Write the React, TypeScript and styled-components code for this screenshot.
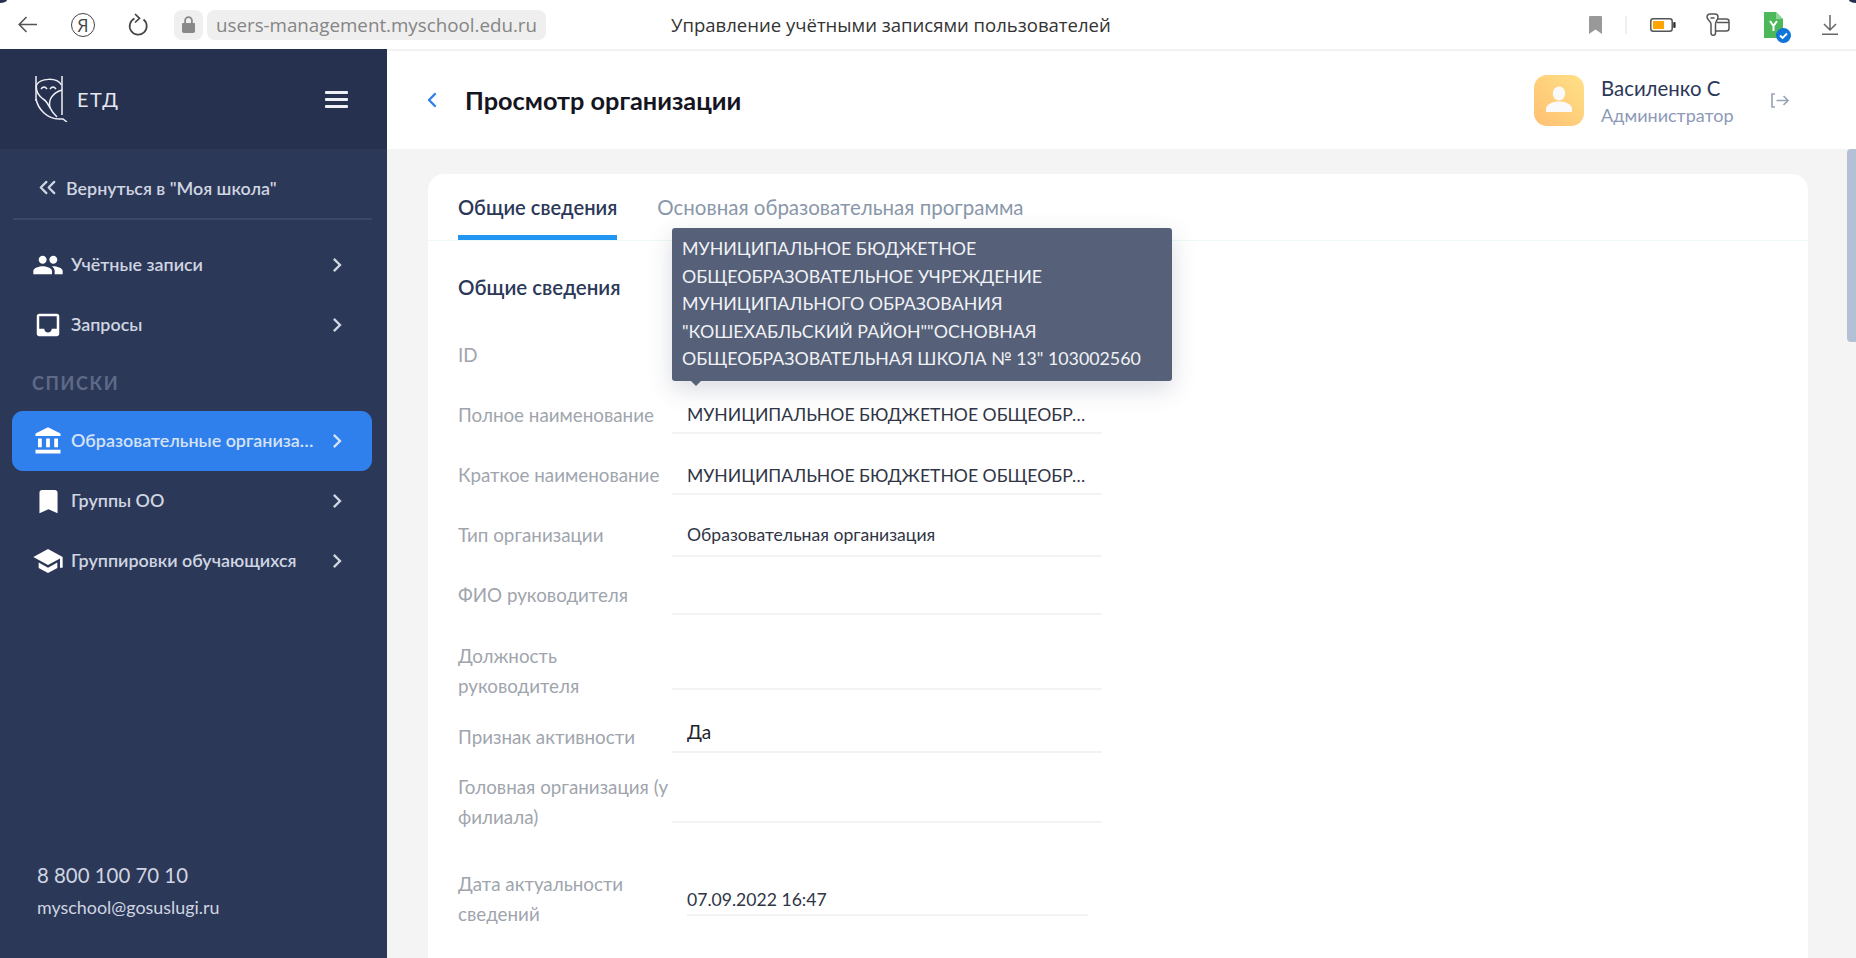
import styled, { createGlobalStyle } from 'styled-components'
import { LuChevronLeft, LuChevronsLeft } from 'react-icons/lu'
import { MdAccountBalance, MdBookmark, MdChevronRight, MdInbox, MdPeople, MdSchool } from 'react-icons/md'
import type { ReactNode } from 'react'

const GlobalStyle = createGlobalStyle`
	html, body {
		margin: 0;
		padding: 0;
		height: 100%;
		overflow: hidden;
		background: #fff;
		font-family: Lato, "Open Sans", "Liberation Sans", sans-serif;
	}
	* {
		box-sizing: border-box;
	}
`

const Page = styled.div`
	display: flex;
	flex-direction: column;
	width: 1856px;
	height: 958px;
	overflow: hidden;
`

const BrowserBar = styled.div`
	position: relative;
	display: flex;
	align-items: center;
	flex: 0 0 49px;
	background: #fff;
	&::before,
	&::after {
		content: '';
		position: absolute;
		top: 0;
		width: 7px;
		height: 3px;
		background: #26304f;
	}
	&::before {
		left: 0;
		border-bottom-right-radius: 7px 3px;
	}
	&::after {
		right: 0;
		border-bottom-left-radius: 7px 3px;
	}
`

const BarIcon = styled.svg<{ $left: number; $down?: number }>`
	flex: none;
	margin-left: ${({ $left }) => $left}px;
	margin-top: ${({ $down }) => $down ?? 0}px;
	display: block;
`

const YandexMark = styled.span`
	flex: none;
	display: flex;
	align-items: center;
	justify-content: center;
	width: 24px;
	height: 24px;
	margin-left: 34px;
	border: 1.6px solid #444;
	border-radius: 50%;
	color: #444;
	font: 18px 'Open Sans', sans-serif;
`

const LockBox = styled.div`
	flex: none;
	display: flex;
	align-items: center;
	justify-content: center;
	width: 29px;
	height: 30px;
	margin-left: 26px;
	background: #efefef;
	border-radius: 8px;
`

const UrlBox = styled.div`
	flex: none;
	width: 339px;
	height: 30px;
	margin-left: 4px;
	padding-left: 9px;
	background: #efefef;
	border-radius: 8px;
	color: #858585;
	font: 18.75px/30px 'Open Sans', sans-serif;
	white-space: nowrap;
`

const PageTitle = styled.div`
	flex: none;
	margin-left: 125px;
	color: #333;
	font: 18.55px/24px 'Open Sans', sans-serif;
	white-space: nowrap;
`

const BarActions = styled.div`
	display: flex;
	align-items: center;
	margin-left: auto;
	padding-right: 18px;
`

const BarSeparator = styled.div`
	width: 2px;
	height: 18px;
	margin-left: 23px;
	background: #f0f0f0;
`

const Body = styled.div`
	display: flex;
	flex: 1;
	min-height: 0;
`

const Sidebar = styled.aside`
	display: flex;
	flex-direction: column;
	flex: 0 0 387px;
	background: #2c3858;
	color: #cfd5e1;
`

const SidebarTop = styled.div`
	display: flex;
	align-items: center;
	justify-content: space-between;
	flex: 0 0 100px;
	padding: 0 39px 0 35px;
	background: #26304f;
`

const Logo = styled.div`
	display: flex;
	align-items: center;
	gap: 8px;
	color: #e4e7ee;
	font-size: 20px;
	letter-spacing: 1.5px;
`

const Hamburger = styled.div`
	display: flex;
	flex-direction: column;
	gap: 4px;
	width: 23px;
	span {
		height: 3px;
		border-radius: 1px;
		background: #eef0f4;
	}
`

const BackLink = styled.div`
	display: flex;
	align-items: center;
	gap: 5px;
	flex: 0 0 71px;
	margin: 0 15px 0 13px;
	padding: 8px 0 0 21px;
	border-bottom: 2px solid #3d4865;
	font-size: 17.9px;
	font-weight: 600;
	white-space: nowrap;
`

const Nav = styled.nav`
	display: flex;
	flex-direction: column;
	padding-top: 15px;
`

const NavItem = styled.div<{ $active?: boolean }>`
	display: flex;
	align-items: center;
	height: 60px;
	margin: 0 15px 0 12px;
	padding-left: 20px;
	border-radius: 11px;
	background: ${({ $active }) => ($active ? '#2f80ed' : 'transparent')};
	color: ${({ $active }) => ($active ? '#d7e2f5' : '#cfd5e1')};
	font-size: 17.9px;
	font-weight: 600;
`

const NavIcon = styled.span`
	display: flex;
	align-items: center;
	justify-content: center;
	flex: 0 0 32px;
	margin-right: 7px;
	color: #fff;
`

const NavLabel = styled.span`
	flex: 0 0 245px;
	margin-bottom: 2px;
	overflow: hidden;
	text-overflow: ellipsis;
	white-space: nowrap;
`

const NavArrow = styled(MdChevronRight)`
	flex: none;
	margin-left: 7px;
`

const NavSection = styled.div`
	display: flex;
	align-items: center;
	height: 56px;
	padding-left: 32px;
	color: #5e6a87;
	font-size: 18px;
	font-weight: 700;
	letter-spacing: 1.6px;
`

const SidebarFooter = styled.div`
	margin-top: auto;
	padding: 0 0 40px 37px;
`

const Phone = styled.div`
	font-size: 20.4px;
	line-height: 26px;
	margin-bottom: 8px;
`

const Email = styled.div`
	font-size: 17.9px;
	line-height: 22px;
`

const Main = styled.main`
	display: flex;
	flex-direction: column;
	flex: 1;
	min-width: 0;
`

const Header = styled.header`
	display: flex;
	align-items: center;
	flex: 0 0 100px;
	padding: 0 67px 0 33px;
	background: #fff;
	border-top: 2px solid #f2f2f2;
`

const BackArrow = styled(LuChevronLeft)`
	color: #2f80ed;
	flex: none;
`

const Title = styled.h1`
	margin: 0 0 0 21px;
	color: #15151f;
	font-size: 25.3px;
	font-weight: 700;
`

const Profile = styled.div`
	display: flex;
	align-items: center;
	margin-left: auto;
`

const Avatar = styled.div`
	display: flex;
	align-items: center;
	justify-content: center;
	width: 50px;
	height: 51px;
	margin-right: 17px;
	border-radius: 13px;
	background: linear-gradient(45deg, #ffbf72, #ffe187);
`

const ProfileText = styled.div`
	display: flex;
	flex-direction: column;
	gap: 5px;
	width: 170px;
	padding-top: 3px;
`

const ProfileName = styled.div`
	color: #2c3858;
	font-size: 20.4px;
	line-height: 22px;
`

const ProfileRole = styled.div`
	color: #8e9ab8;
	font-size: 18px;
	line-height: 22px;
`

const Content = styled.div`
	position: relative;
	flex: 1;
	min-height: 0;
	padding: 25px 48px 0 41px;
	background: #f4f4f4;
	overflow: hidden;
`

const ScrollThumb = styled.div`
	position: absolute;
	top: 0;
	right: 0;
	width: 9px;
	height: 193px;
	background: #b4c0d6;
	border-radius: 4px 0 0 4px;
`

const Card = styled.section`
	position: relative;
	height: 1000px;
	background: #fff;
	border-radius: 16px;
`

const Tabs = styled.div`
	display: flex;
	gap: 40px;
	height: 67px;
	padding-left: 30px;
	border-bottom: 1px solid #eefaf2;
`

const Tab = styled.div<{ $active?: boolean }>`
	height: 66px;
	padding-top: 21px;
	border-bottom: 5px solid ${({ $active }) => ($active ? '#2196f3' : 'transparent')};
	color: ${({ $active }) => ($active ? '#2c3858' : '#8a97aa')};
	font-size: ${({ $active }) => ($active ? '20.1px' : '20.5px')};
	font-weight: ${({ $active }) => ($active ? 600 : 400)};
	line-height: 24px;
	white-space: nowrap;
`

const Form = styled.div`
	padding-left: 30px;
`

const SectionTitle = styled.h2`
	margin: 34px 0 0;
	height: 25px;
	color: #2c3858;
	font-size: 20.5px;
	font-weight: 600;
	line-height: 24px;
`

const Row = styled.div<{ $height: number }>`
	display: grid;
	grid-template-columns: 214px 430px;
	grid-template-rows: ${({ $height }) => $height}px;
	height: ${({ $height }) => $height}px;
`

const Label = styled.div<{ $top: number }>`
	padding-top: ${({ $top }) => $top}px;
	color: #a0a5ad;
	font-size: 18.8px;
	line-height: 30px;
`

const Value = styled.div<{ $bottom: number; $inset?: boolean; $large?: boolean }>`
	display: flex;
	align-items: flex-end;
	margin: ${({ $inset }) => ($inset ? '0 14px 0 15px' : '0')};
	padding: 0 15px ${({ $bottom }) => $bottom}px ${({ $inset }) => ($inset ? '0' : '15px')};
	border-bottom: 2px solid #f3f3f3;
	color: ${({ $large }) => ($large ? '#23242b' : '#2f3545')};
	font-size: ${({ $large }) => ($large ? '19px' : '17.6px')};
	line-height: 20px;
	min-width: 0;
`

const ValueText = styled.span`
	overflow: hidden;
	text-overflow: ellipsis;
	white-space: nowrap;
`

const Tooltip = styled.div`
	position: absolute;
	top: 54px;
	left: 244px;
	width: 500px;
	height: 153px;
	padding: 7px 10px;
	background: #566078;
	border-radius: 3px;
	box-shadow: 0 8px 24px rgba(44, 56, 88, 0.18);
	color: #f0f2f6;
	font-size: 17.8px;
	line-height: 27.5px;
	&::after {
		content: '';
		position: absolute;
		left: 19px;
		bottom: -5px;
		border-top: 5px solid #566078;
		border-left: 5px solid transparent;
		border-right: 5px solid transparent;
	}
`

const FULL_NAME = 'МУНИЦИПАЛЬНОЕ БЮДЖЕТНОЕ ОБЩЕОБРАЗОВАТЕЛЬНОЕ УЧРЕЖДЕНИЕ'

const navTop = [
	{ icon: <MdPeople size={32} />, label: 'Учётные записи' },
	{ icon: <MdInbox size={30} />, label: 'Запросы' },
]

const navLists: { icon: ReactNode; label: string; active?: boolean }[] = [
	{ icon: <MdAccountBalance size={30} />, label: 'Образовательные организации', active: true },
	{ icon: <MdBookmark size={31} />, label: 'Группы ОО' },
	{ icon: <MdSchool size={32} />, label: 'Группировки обучающихся' },
]

const rows = [
	{ label: 'ID', value: '', height: 73, top: 40, bottom: 7 },
	{ label: 'Полное наименование', value: FULL_NAME, height: 61, top: 27, bottom: 7 },
	{ label: 'Краткое наименование', value: FULL_NAME, height: 61, top: 26, bottom: 7 },
	{ label: 'Тип организации', value: 'Образовательная организация', height: 62, top: 25, bottom: 10 },
	{ label: 'ФИО руководителя', value: '', height: 58, top: 23, bottom: 7 },
	{ label: 'Должность руководителя', value: '', height: 75, top: 26, bottom: 7 },
	{ label: 'Признак активности', value: 'Да', height: 63, top: 32, bottom: 9, large: true },
	{ label: 'Головная организация (у филиала)', value: '', height: 70, top: 19, bottom: 7 },
	{ label: 'Дата актуальности сведений', value: '07.09.2022 16:47', height: 93, top: 46, bottom: 4, inset: true },
]

const App = () => (
	<Page>
		<GlobalStyle />
		<BrowserBar>
			<BarIcon $left={18} width="19" height="17" viewBox="0 0 19 17" fill="none" stroke="#555" strokeWidth="1.6">
				<path d="M19 8.5H1.5M8.5 1L1.2 8.5L8.5 16" />
			</BarIcon>
			<YandexMark>Я</YandexMark>
			<BarIcon $left={33} width="20" height="23" viewBox="0 0 20 23" fill="none" stroke="#444" strokeWidth="1.7">
				<path d="M6.5 5.5A8.5 8.5 0 1 0 15.5 6.5" />
				<path d="M7 1L11.5 5.3L7 9.5" />
			</BarIcon>
			<LockBox>
				<svg width="13" height="17" viewBox="0 0 13 17" fill="#888">
					<path d="M2.2 7V4.6a4.3 4.3 0 0 1 8.6 0V7H12.2a.8.8 0 0 1 .8.8v7.4a1.8 1.8 0 0 1-1.8 1.8H1.8A1.8 1.8 0 0 1 0 15.2V7.8A.8.8 0 0 1 .8 7ZM4 7h5V4.6a2.5 2.5 0 0 0-5 0Z" />
				</svg>
			</LockBox>
			<UrlBox>users-management.myschool.edu.ru</UrlBox>
			<PageTitle>Управление учётными записями пользователей</PageTitle>
			<BarActions>
				<svg width="13" height="18" viewBox="0 0 13 18" fill="#999">
					<path d="M1 0H12a1 1 0 0 1 1 1V18L6.5 13.5L0 18V1a1 1 0 0 1 1-1Z" />
				</svg>
				<BarSeparator />
				<BarIcon $left={23} width="26" height="14" viewBox="0 0 26 14">
					<rect x="0.8" y="0.8" width="21.4" height="12.4" rx="2.5" fill="none" stroke="#555" strokeWidth="1.5" />
					<rect x="3" y="3" width="11" height="8" fill="#ffa400" />
					<rect x="23.2" y="4" width="2.4" height="6" rx="1" fill="#333" />
				</BarIcon>
				<BarIcon $left={30} width="24" height="23" viewBox="0 0 24 23" fill="none" stroke="#555" strokeWidth="1.5">
					<path d="M1 4a3 3 0 0 1 3-3h5a3 3 0 0 1 3 3c0 3-2.5 4-2.5 7v9a2.2 2.2 0 0 1-4.5 0V11C5 8 1 7 1 4Z" />
					<path d="M4.5 5h4" />
					<path d="M12 6h8.5a2.5 2.5 0 0 1 2.5 2.5v7a2.5 2.5 0 0 1-2.5 2.5H9.5" />
					<path d="M11 9.5h12" />
				</BarIcon>
				<BarIcon $left={34} $down={6} width="27" height="31" viewBox="0 0 27 31">
					<path d="M0 0H12L19 7V26H0Z" fill="#4cb85a" />
					<path d="M12 0L19 7H12Z" fill="#8fd698" />
					<path d="M6 9L9.5 14L13 9M9.5 14V19" fill="none" stroke="#fff" strokeWidth="2" />
					<circle cx="19.5" cy="23.5" r="7.5" fill="#0f75d8" />
					<path d="M16 23.5L18.6 26L23 21.5" fill="none" stroke="#fff" strokeWidth="1.8" />
				</BarIcon>
				<BarIcon $left={31} width="16" height="20" viewBox="0 0 16 20" fill="none" stroke="#666" strokeWidth="1.5">
					<path d="M8 0V15M2 9L8 15L14 9M0 19.2H16" />
				</BarIcon>
			</BarActions>
		</BrowserBar>
		<Body>
			<Sidebar>
				<SidebarTop>
					<Logo>
						<svg width="34" height="46" viewBox="0 0 34 46" fill="none" stroke="#eef0f4" strokeWidth="1.5">
							<path d="M1 0V25M27 0V39" />
							<path d="M1.5 9C5 2 22 1 26.5 9" />
							<path d="M1.5 9C0.5 15 4 20 8 23C14 26 14 34 22 41" />
							<path d="M1 23C3 33 12 43 24 43H28L32 46" />
							<path d="M6 13Q9 9 12 13M15 13Q18 9 21 13" />
							<path d="M27 14C17 17 13 24 15 32" />
						</svg>
						ЕТД
					</Logo>
					<Hamburger>
						<span />
						<span />
						<span />
					</Hamburger>
				</SidebarTop>
				<BackLink>
					<LuChevronsLeft size={27} strokeWidth={2} />
					Вернуться в "Моя школа"
				</BackLink>
				<Nav>
					{navTop.map(item => (
						<NavItem key={item.label}>
							<NavIcon>{item.icon}</NavIcon>
							<NavLabel>{item.label}</NavLabel>
							<NavArrow size={28} />
						</NavItem>
					))}
					<NavSection>СПИСКИ</NavSection>
					{navLists.map(item => (
						<NavItem key={item.label} $active={item.active}>
							<NavIcon>{item.icon}</NavIcon>
							<NavLabel>{item.label}</NavLabel>
							<NavArrow size={28} />
						</NavItem>
					))}
				</Nav>
				<SidebarFooter>
					<Phone>8 800 100 70 10</Phone>
					<Email>myschool@gosuslugi.ru</Email>
				</SidebarFooter>
			</Sidebar>
			<Main>
				<Header>
					<BackArrow size={24} strokeWidth={2.4} />
					<Title>Просмотр организации</Title>
					<Profile>
						<Avatar>
							<svg width="28" height="28" viewBox="0 0 28 28" fill="#fafafa">
								<ellipse cx="14" cy="7.5" rx="6.2" ry="7" />
								<path d="M1 26V23C1 18 8 15.5 14 15.5S27 18 27 23V26Z" />
							</svg>
						</Avatar>
						<ProfileText>
							<ProfileName>Василенко С</ProfileName>
							<ProfileRole>Администратор</ProfileRole>
						</ProfileText>
						<svg width="18" height="15" viewBox="0 0 18 15" fill="none" stroke="#9aa5b8" strokeWidth="1.7">
							<path d="M4 1H1V14H4M5.5 7.5H17M12.5 3L17 7.5L12.5 12" />
						</svg>
					</Profile>
				</Header>
				<Content>
					<ScrollThumb />
					<Card>
						<Tabs>
							<Tab $active>Общие сведения</Tab>
							<Tab>Основная образовательная программа</Tab>
						</Tabs>
						<Form>
							<SectionTitle>Общие сведения</SectionTitle>
							{rows.map(row => (
								<Row key={row.label} $height={row.height}>
									<Label $top={row.top}>{row.label}</Label>
									<Value $bottom={row.bottom} $inset={row.inset} $large={row.large}>
										<ValueText>{row.value}</ValueText>
									</Value>
								</Row>
							))}
						</Form>
						<Tooltip>
							МУНИЦИПАЛЬНОЕ БЮДЖЕТНОЕ ОБЩЕОБРАЗОВАТЕЛЬНОЕ УЧРЕЖДЕНИЕ МУНИЦИПАЛЬНОГО ОБРАЗОВАНИЯ
							"КОШЕХАБЛЬСКИЙ РАЙОН""ОСНОВНАЯ ОБЩЕОБРАЗОВАТЕЛЬНАЯ ШКОЛА № 13" 103002560
						</Tooltip>
					</Card>
				</Content>
			</Main>
		</Body>
	</Page>
)

export default App
